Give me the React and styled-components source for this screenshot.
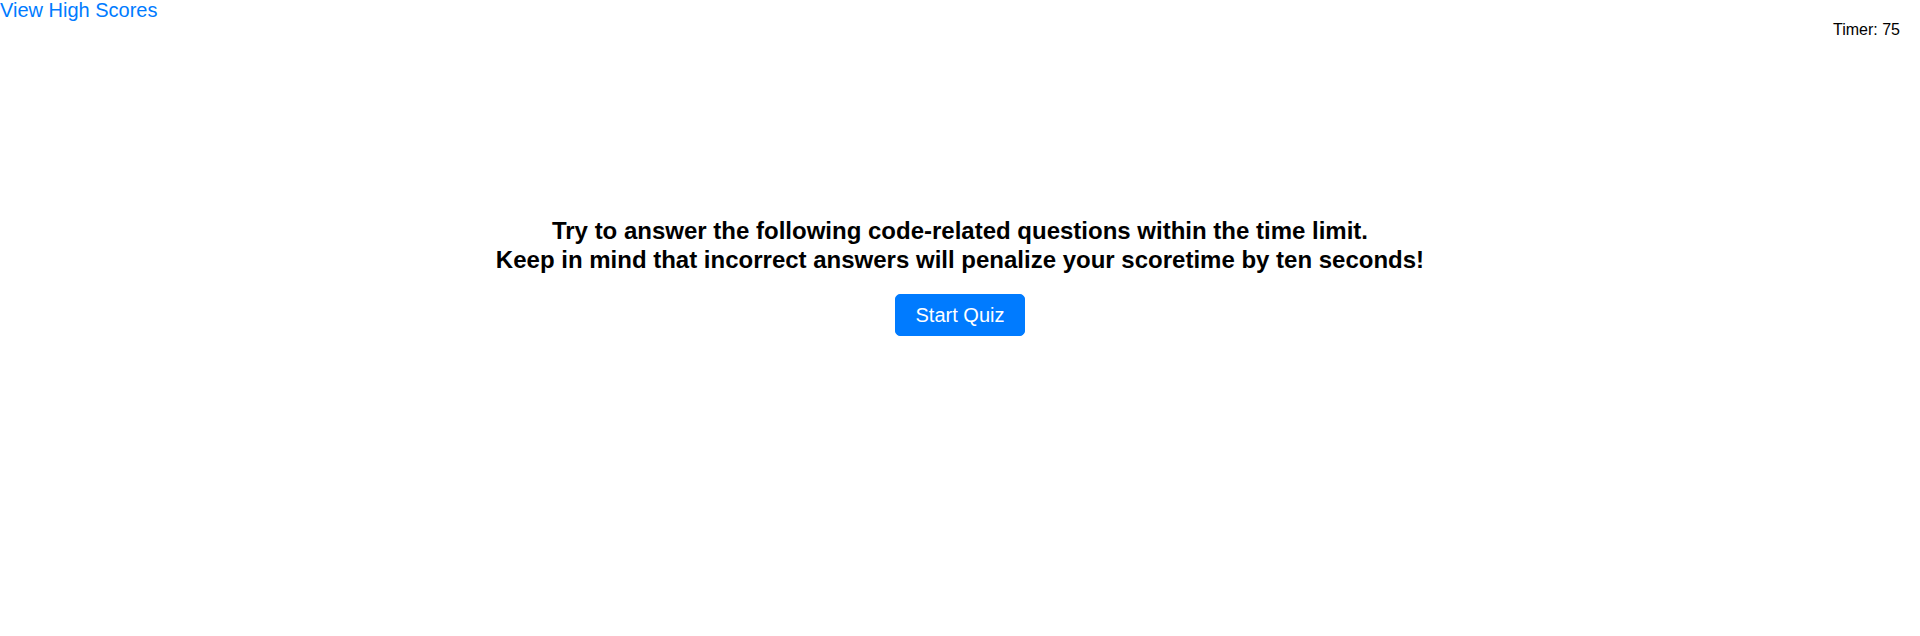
import styled, { createGlobalStyle } from 'styled-components';

const GlobalStyle = createGlobalStyle`
    html, body {
        margin: 0;
        padding: 0;
        background: #ffffff;
        font-family: 'Liberation Sans', Arial, sans-serif;
        color: #000000;
    }
`

function App() {
    return (
        <>
        <GlobalStyle />
        <Page>
            <Header>
                <ScoresLink href="#">View High Scores</ScoresLink>
                <Timer>Timer: 75</Timer>
            </Header>
            <Intro>
                <Heading>
                    Try to answer the following code-related questions within the time limit.
                    <br />
                    Keep in mind that incorrect answers will penalize your scoretime by ten seconds!
                </Heading>
                <StartButton>Start Quiz</StartButton>
            </Intro>
        </Page>
        </>
    );
}

export default App;

const Page = styled.div`
    width: 1920px;
    min-height: 636px;
    display: flex;
    flex-direction: column;
`

const Header = styled.header`
    display: flex;
    justify-content: space-between;
    align-items: flex-start;
`

const ScoresLink = styled.a`
    font-size: 20px;
    line-height: 1;
    color: #007bff;
    text-decoration: none;
`

const Timer = styled.div`
    font-size: 16px;
    line-height: 24px;
    margin-top: 18px;
    margin-right: 20px;
`

const Intro = styled.main`
    display: flex;
    flex-direction: column;
    align-items: center;
    padding-top: 175px;
`

const Heading = styled.h4`
    margin: 0;
    font-size: 24px;
    font-weight: 700;
    line-height: 1.2;
    text-align: center;
`

const StartButton = styled.button`
    margin-top: 19px;
    padding: 5px 20px;
    font-family: 'Liberation Sans', Arial, sans-serif;
    font-size: 20px;
    line-height: 30px;
    color: #ffffff;
    background-color: #007bff;
    border: 1px solid #007bff;
    border-radius: 5px;
    cursor: pointer;
`
